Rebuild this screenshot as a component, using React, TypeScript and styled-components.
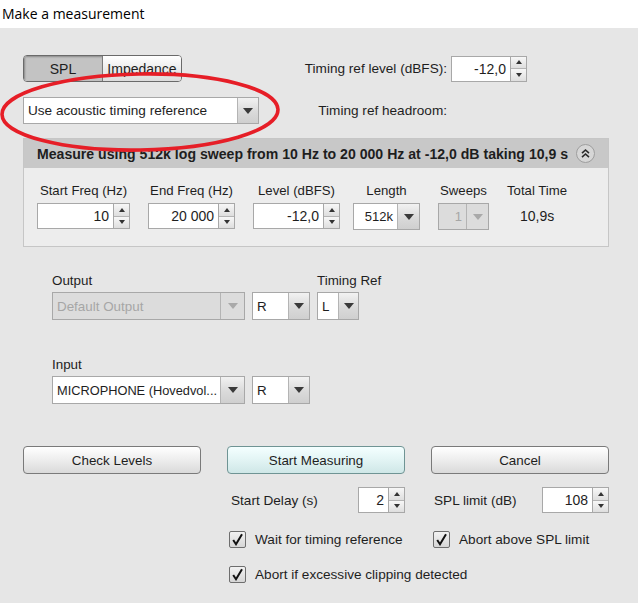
import styled, { createGlobalStyle } from 'styled-components'

const GlobalStyle = createGlobalStyle`
  html, body {
    margin: 0;
    padding: 0;
    background: #e6e6e6;
  }
  body {
    font-family: "Liberation Sans", Arial, sans-serif;
    font-size: 13px;
    color: #1e1e1e;
  }
`

const Window = styled.div`
  width: 638px;
  height: 603px;
  display: flex;
  flex-direction: column;
  position: relative;
  overflow: hidden;
`

const TitleBar = styled.div`
  height: 28px;
  background: #ffffff;
  font-family: "Open Sans", "Noto Sans", sans-serif;
  font-size: 14px;
  line-height: 28px;
  padding-left: 2px;
  color: #000;
`

const Body = styled.div`
  flex: 1;
  background: #e6e6e6;
  padding: 27px 29px 0 23px;
  display: flex;
  flex-direction: column;
`

const TopGrid = styled.div`
  display: grid;
  grid-template-columns: 236px 192px 76px;
  grid-template-rows: 27px 27px;
  row-gap: 15px;
  align-items: center;
  font-size: 13.6px;
`

const RightLabel = styled.div`
  text-align: right;
  padding-right: 4px;
`

const Toggle = styled.div`
  display: flex;
  width: 159px;
  height: 27px;
  box-sizing: border-box;
  border: 1px solid #6a6a6a;
  border-radius: 4px;
  overflow: hidden;
  background: #fff;
  font-size: 14px;
`

const ToggleHalf = styled.div<{ $on?: boolean }>`
  flex: 1;
  display: flex;
  align-items: center;
  justify-content: center;
  white-space: nowrap;
  ${(p) =>
    p.$on
      ? `background: #c3c3c3; box-shadow: inset 1px 1px 2px #8a8a8a; border-right: 1px solid #7a7a7a;`
      : `background: linear-gradient(#ffffff, #e9e9e9 60%, #dcdcdc);`}
`

const ComboBox = styled.div<{ $w: number; $tall?: boolean; $disabled?: boolean }>`
  display: inline-flex;
  width: ${(p) => p.$w}px;
  height: ${(p) => (p.$tall ? 28 : 27)}px;
  box-sizing: border-box;
  border: 1px solid #a8a8a8;
  background: ${(p) => (p.$disabled ? '#dcdcdc' : '#ffffff')};
  color: ${(p) => (p.$disabled ? '#a6a6a6' : '#1e1e1e')};
`

const ComboText = styled.div<{ $right?: boolean; $size?: number }>`
  flex: 1;
  min-width: 0;
  display: flex;
  align-items: center;
  justify-content: ${(p) => (p.$right ? 'flex-end' : 'flex-start')};
  padding: 0 ${(p) => (p.$right ? '4px' : '0')} 0 ${(p) => (p.$right ? '0' : '4px')};
  white-space: nowrap;
  ${(p) => (p.$size ? `font-size: ${p.$size}px;` : '')}
`

const ComboArrow = styled.div<{ $w: number; $disabled?: boolean }>`
  width: ${(p) => p.$w}px;
  flex: none;
  border-left: 1px solid #b4b4b4;
  background: ${(p) =>
    p.$disabled ? '#dcdcdc' : 'linear-gradient(#f2f2f2, #dadada 55%, #cfcfcf)'};
  display: flex;
  align-items: center;
  justify-content: center;
  &::after {
    content: '';
    border-left: 5px solid transparent;
    border-right: 5px solid transparent;
    border-top: 6px solid ${(p) => (p.$disabled ? '#a9a9a9' : '#3a3a3a')};
  }
`

const SpinBox = styled.div<{ $w: number }>`
  display: inline-flex;
  width: ${(p) => p.$w}px;
  height: 26px;
`

const SpinField = styled.div`
  flex: 1;
  background: #fff;
  border: 1px solid #a8a8a8;
  display: flex;
  align-items: center;
  justify-content: flex-end;
  padding-right: 4px;
  font-size: 14px;
`

const SpinButtons = styled.div`
  width: 15px;
  display: flex;
  flex-direction: column;
  border: 1px solid #a8a8a8;
  border-left: none;
`

const SpinHalf = styled.div<{ $down?: boolean }>`
  flex: 1;
  display: flex;
  align-items: center;
  justify-content: center;
  background: linear-gradient(#f7f7f7, #dedede);
  ${(p) => (p.$down ? 'border-top: 1px solid #b4b4b4;' : '')}
  &::after {
    content: '';
    border-left: 3px solid transparent;
    border-right: 3px solid transparent;
    ${(p) => (p.$down ? 'border-top: 4px solid #333;' : 'border-bottom: 4px solid #333;')}
  }
`

const Panel = styled.div`
  margin-top: 14px;
  border: 1px solid #c6c6c6;
  background: #ededed;
`

const PanelHeader = styled.div`
  height: 29px;
  background: #c8c8c8;
  display: flex;
  align-items: center;
  justify-content: space-between;
  padding: 0 13px 0 13px;
  font-weight: bold;
  font-size: 14.1px;
  white-space: nowrap;
`

const CollapseIcon = styled.div`
  width: 19px;
  height: 19px;
  flex: none;
  box-sizing: border-box;
  border-radius: 50%;
  border: 1px solid #9e9e9e;
  background: #d6d6d6;
  display: flex;
  align-items: center;
  justify-content: center;
`

const PanelBody = styled.div`
  display: flex;
  gap: 18px;
  padding: 15px 0 16px 13px;
`

const FieldGroup = styled.div<{ $ml?: number }>`
  display: flex;
  flex-direction: column;
  align-items: center;
  ${(p) => (p.$ml ? `margin-left: ${p.$ml}px;` : '')}
`

const FieldLabel = styled.div`
  line-height: 16px;
  margin-bottom: 4px;
  white-space: nowrap;
  font-size: 13.2px;
`

const FieldValue = styled.div`
  height: 26px;
  display: flex;
  align-items: center;
  font-size: 14px;
`

const DeviceSection = styled.div`
  margin-top: 26px;
  padding-left: 29px;
  display: flex;
  flex-direction: column;
  font-size: 13.4px;
`

const DeviceRow = styled.div<{ $mt?: number }>`
  display: flex;
  gap: 7px;
  align-items: flex-end;
  ${(p) => (p.$mt ? `margin-top: ${p.$mt}px;` : '')}
`

const DeviceCol = styled.div`
  display: flex;
  flex-direction: column;
`

const DeviceLabel = styled.div`
  line-height: 16px;
  margin-bottom: 3px;
`

const ButtonRow = styled.div`
  margin-top: 42px;
  display: grid;
  grid-template-columns: repeat(3, 178px);
  column-gap: 26px;
`

const Button = styled.div<{ $primary?: boolean }>`
  height: 28px;
  box-sizing: border-box;
  border-radius: 4px;
  border: 1px solid ${(p) => (p.$primary ? '#6f9494' : '#7a7a7a')};
  background: ${(p) =>
    p.$primary
      ? 'linear-gradient(#f4ffff, #e2f4f4 50%, #cfe7e7)'
      : 'linear-gradient(#ffffff, #ededed 50%, #dadada)'};
  display: flex;
  align-items: center;
  justify-content: center;
  font-size: 13.4px;
`

const Options = styled.div`
  margin-left: 204px;
  margin-top: 13px;
  display: grid;
  grid-template-columns: 178px 178px;
  column-gap: 26px;
  font-size: 13.6px;
`

const SpinRow = styled.div<{ $pl: number }>`
  display: flex;
  align-items: center;
  justify-content: space-between;
  padding-left: ${(p) => p.$pl}px;
  height: 26px;
`

const CheckRow = styled.label<{ $span?: boolean }>`
  display: flex;
  align-items: center;
  gap: 9px;
  padding-left: 2px;
  height: 17px;
  margin-top: 18px;
  white-space: nowrap;
  ${(p) => (p.$span ? 'grid-column: 1 / span 2;' : '')}
`

const CheckBox = styled.span`
  width: 17px;
  height: 17px;
  box-sizing: border-box;
  border: 1px solid #6e6e6e;
  border-radius: 2px;
  background: linear-gradient(#f2f2f2, #d6d6d6);
  display: flex;
  align-items: center;
  justify-content: center;
`

const Highlight = styled.svg`
  position: absolute;
  left: 0;
  top: 0;
  pointer-events: none;
`

function Combo({
  text,
  width,
  arrow = 20,
  tall,
  disabled,
  right,
  size,
}: {
  text: string
  width: number
  arrow?: number
  tall?: boolean
  disabled?: boolean
  right?: boolean
  size?: number
}) {
  return (
    <ComboBox $w={width} $tall={tall} $disabled={disabled}>
      <ComboText $right={right} $size={size}>
        {text}
      </ComboText>
      <ComboArrow $w={arrow} $disabled={disabled} />
    </ComboBox>
  )
}

function Spinner({ value, width }: { value: string; width: number }) {
  return (
    <SpinBox $w={width}>
      <SpinField>{value}</SpinField>
      <SpinButtons>
        <SpinHalf />
        <SpinHalf $down />
      </SpinButtons>
    </SpinBox>
  )
}

function Check({ label, span }: { label: string; span?: boolean }) {
  return (
    <CheckRow $span={span}>
      <CheckBox>
        <svg width="13" height="13" viewBox="0 0 13 13">
          <path d="M2.2 7 L5 11.2 L11 1.2" fill="none" stroke="#111" strokeWidth="2" />
        </svg>
      </CheckBox>
      {label}
    </CheckRow>
  )
}

export default function App() {
  return (
    <Window>
      <GlobalStyle />
      <TitleBar>Make a measurement</TitleBar>
      <Body>
        <TopGrid>
          <Toggle>
            <ToggleHalf $on>SPL</ToggleHalf>
            <ToggleHalf>Impedance</ToggleHalf>
          </Toggle>
          <RightLabel>Timing ref level (dBFS):</RightLabel>
          <Spinner value="-12,0" width={76} />
          <Combo text="Use acoustic timing reference" width={236} />
          <RightLabel>Timing ref headroom:</RightLabel>
          <div />
        </TopGrid>

        <Panel>
          <PanelHeader>
            <span>Measure using 512k log sweep from 10 Hz to 20 000 Hz at -12,0 dB taking 10,9 s</span>
            <CollapseIcon>
              <svg width="11" height="11" viewBox="0 0 11 11">
                <path
                  d="M2 5.2 L5.5 2 L9 5.2 M2 9.2 L5.5 6 L9 9.2"
                  fill="none"
                  stroke="#2a2a2a"
                  strokeWidth="1.6"
                />
              </svg>
            </CollapseIcon>
          </PanelHeader>
          <PanelBody>
            <FieldGroup>
              <FieldLabel>Start Freq (Hz)</FieldLabel>
              <Spinner value="10" width={93} />
            </FieldGroup>
            <FieldGroup>
              <FieldLabel>End Freq (Hz)</FieldLabel>
              <Spinner value="20 000" width={87} />
            </FieldGroup>
            <FieldGroup>
              <FieldLabel>Level (dBFS)</FieldLabel>
              <Spinner value="-12,0" width={87} />
            </FieldGroup>
            <FieldGroup $ml={-5}>
              <FieldLabel>Length</FieldLabel>
              <Combo text="512k" width={67} arrow={21} right />
            </FieldGroup>
            <FieldGroup>
              <FieldLabel>Sweeps</FieldLabel>
              <Combo text="1" width={51} arrow={21} right disabled />
            </FieldGroup>
            <FieldGroup>
              <FieldLabel>Total Time</FieldLabel>
              <FieldValue>10,9s</FieldValue>
            </FieldGroup>
          </PanelBody>
        </Panel>

        <DeviceSection>
          <DeviceRow>
            <DeviceCol>
              <DeviceLabel>Output</DeviceLabel>
              <Combo text="Default Output" width={193} arrow={23} tall disabled />
            </DeviceCol>
            <Combo text="R" width={58} arrow={20} tall />
            <DeviceCol>
              <DeviceLabel>Timing Ref</DeviceLabel>
              <Combo text="L" width={42} arrow={19} tall />
            </DeviceCol>
          </DeviceRow>
          <DeviceRow $mt={37}>
            <DeviceCol>
              <DeviceLabel>Input</DeviceLabel>
              <Combo text="MICROPHONE (Hovedvol..." width={193} arrow={23} tall size={12.8} />
            </DeviceCol>
            <Combo text="R" width={58} arrow={20} tall />
          </DeviceRow>
        </DeviceSection>

        <ButtonRow>
          <Button>Check Levels</Button>
          <Button $primary>Start Measuring</Button>
          <Button>Cancel</Button>
        </ButtonRow>

        <Options>
          <SpinRow $pl={4}>
            <span>Start Delay (s)</span>
            <Spinner value="2" width={47} />
          </SpinRow>
          <SpinRow $pl={3}>
            <span>SPL limit (dB)</span>
            <Spinner value="108" width={67} />
          </SpinRow>
          <Check label="Wait for timing reference" />
          <Check label="Abort above SPL limit" />
          <Check label="Abort if excessive clipping detected" span />
        </Options>
      </Body>

      <Highlight width="638" height="603" viewBox="0 0 638 603">
        <ellipse
          cx="140"
          cy="112"
          rx="138"
          ry="38"
          fill="none"
          stroke="#e61e27"
          strokeWidth="3.6"
          transform="rotate(-1 140 112)"
        />
      </Highlight>
    </Window>
  )
}
